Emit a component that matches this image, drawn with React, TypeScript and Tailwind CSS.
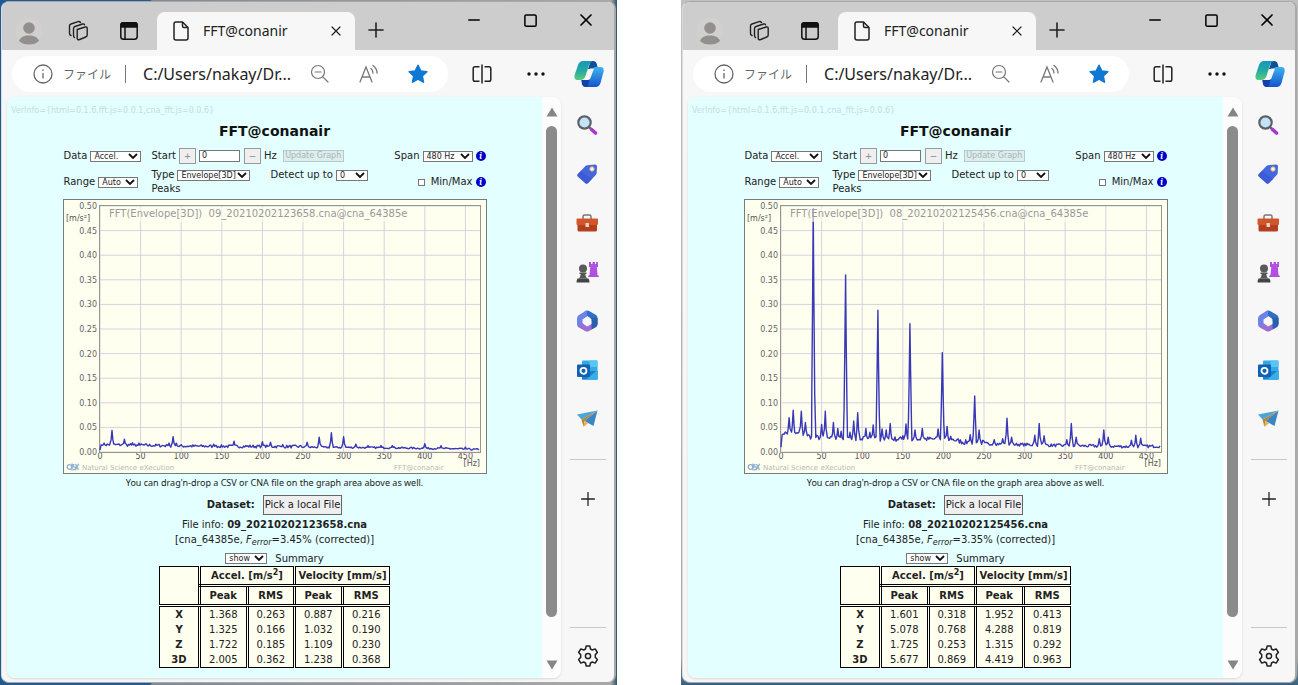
import type { ReactNode } from "react";
import { Minus, Plus, Square, X } from "lucide-react";

type Peak = [hz: number, value: number];

type Capture = {
  id: string;
  file: string;
  error: string;
  base: Peak[];
  peaks: Peak[];
  noise: number;
  summary: [string, string, string, string, string][];
};

const CAPTURES: Capture[] = [
  {
    id: "left",
    file: "09_20210202123658.cna",
    error: "3.45%",
    noise: 0.006,
    base: [[0, 0.004], [2, 0.012], [50, 0.011], [100, 0.009], [250, 0.008], [350, 0.007], [430, 0.005], [470, 0.003]],
    peaks: [
      [5, 0.018], [14.8, 0.044], [30, 0.026], [40, 0.019], [48, 0.018], [85, 0.018], [90, 0.031], [94, 0.018],
      [140, 0.016], [165, 0.022], [200, 0.021], [210, 0.02], [225, 0.015], [255, 0.02], [270, 0.03], [285, 0.039],
      [300, 0.031], [315, 0.016], [330, 0.013], [346, 0.013], [360, 0.013], [400, 0.017], [420, 0.013], [450, 0.01],
    ],
    summary: [
      ["X", "1.368", "0.263", "0.887", "0.216"],
      ["Y", "1.325", "0.166", "1.032", "0.190"],
      ["Z", "1.722", "0.185", "1.109", "0.230"],
      ["3D", "2.005", "0.362", "1.238", "0.368"],
    ],
  },
  {
    id: "right",
    file: "08_20210202125456.cna",
    error: "3.35%",
    noise: 0.01,
    base: [[0, 0.01], [2, 0.034], [30, 0.031], [36, 0.026], [60, 0.022], [210, 0.021], [225, 0.015], [300, 0.012], [350, 0.01], [430, 0.008], [470, 0.009]],
    peaks: [
      [10, 0.07], [15, 0.085], [25, 0.083], [30, 0.06], [39.7, 0.495], [50, 0.056], [54.5, 0.083], [64.5, 0.06],
      [70, 0.048], [74, 0.042], [79.5, 0.36], [85, 0.04], [89.5, 0.063], [94.5, 0.08], [104.5, 0.048], [109.5, 0.04],
      [113.5, 0.055], [119.3, 0.288], [124.5, 0.047], [129.5, 0.045], [134.5, 0.058], [150, 0.033], [154, 0.057],
      [158.8, 0.261], [165, 0.045], [174, 0.048], [193.5, 0.047], [198.7, 0.202], [204.5, 0.052], [209, 0.032],
      [233, 0.035], [238.5, 0.114], [244, 0.045], [262.5, 0.025], [273, 0.027], [278.3, 0.069], [284, 0.03],
      [312.5, 0.034], [318, 0.058], [324, 0.033], [352, 0.025], [357.5, 0.058], [363.5, 0.03], [392, 0.027],
      [397.5, 0.045], [403, 0.03], [431.5, 0.024], [437, 0.034], [443, 0.028],
    ],
    summary: [
      ["X", "1.601", "0.318", "1.952", "0.413"],
      ["Y", "5.078", "0.768", "4.288", "0.819"],
      ["Z", "1.725", "0.253", "1.315", "0.292"],
      ["3D", "5.677", "0.869", "4.419", "0.963"],
    ],
  },
];

// plot area inside the 424x275 graph
const X0 = 37;
const X1 = 417;
const Y0 = 253;
const PX_PER_HZ = 0.812;
const PX_PER_UNIT = 492;

function baseAt(base: Peak[], hz: number) {
  for (let i = 1; i < base.length; i++) {
    const [h0, v0] = base[i - 1];
    const [h1, v1] = base[i];
    if (hz <= h1) return v0 + ((v1 - v0) * (hz - h0)) / (h1 - h0);
  }
  return base[base.length - 1][1];
}

function spectrum({ base, peaks, noise }: Capture) {
  let seed = 7;
  const random = () => {
    seed = (seed * 16807) % 2147483647;
    return seed / 2147483647;
  };
  const samples: Peak[] = [];
  for (let hz = 0; hz <= 467; hz += 1.3) {
    if (peaks.some(([p]) => Math.abs(p - hz) < 1.9)) continue;
    const fade = hz > 250 ? 0.6 : 1;
    samples.push([hz, baseAt(base, hz) + random() * noise * fade]);
  }
  // tall peaks get wide shoulders, small ones a plain tip
  for (const [hz, value] of peaks) {
    const floor = baseAt(base, hz);
    const shoulders = value > 0.1 ? [[0.8, 0.6], [1.8, 0.2]] : [[1.1, 0.4]];
    samples.push([hz, value]);
    for (const [offset, share] of shoulders) {
      samples.push([hz - offset, floor + (value - floor) * share]);
      samples.push([hz + offset, floor + (value - floor) * share]);
    }
  }
  return samples
    .sort((a, b) => a[0] - b[0])
    .map(([hz, v]) => `${(X0 + hz * PX_PER_HZ).toFixed(1)},${(Y0 - v * PX_PER_UNIT).toFixed(1)}`)
    .join(" ");
}

function Graph({ capture }: { capture: Capture }) {
  const rows = Array.from({ length: 11 }, (_, i) => i * 0.05);
  const cols = Array.from({ length: 10 }, (_, i) => i * 50);
  return (
    <svg viewBox="0 0 424 275" className="mt-0.5 block w-full" fontFamily='"DejaVu Sans", Verdana, sans-serif' role="img" aria-label="FFT graph">
      <rect x="0.5" y="0.5" width="423" height="274" fill="#fffff0" stroke="#747c7c" />
      {rows.map((v) => (
        <g key={v}>
          <line x1={X0} x2={X1} y1={Y0 - v * PX_PER_UNIT} y2={Y0 - v * PX_PER_UNIT} stroke="#d3d3dc" />
          <text x="34" y={Y0 - v * PX_PER_UNIT + 3} textAnchor="end" fontSize="8" fill="#666">{v.toFixed(2)}</text>
        </g>
      ))}
      {cols.map((hz) => (
        <g key={hz}>
          <line x1={X0 + hz * PX_PER_HZ} x2={X0 + hz * PX_PER_HZ} y1="7" y2={Y0} stroke="#d3d3dc" />
          <text x={X0 + hz * PX_PER_HZ} y="260" textAnchor="middle" fontSize="8" fill="#555">{hz}</text>
        </g>
      ))}
      <rect x={X0 - 0.5} y="6.5" width={X1 - X0 + 1} height={Y0 - 6} fill="none" stroke="#9c948c" />
      <text x="3" y="22" fontSize="8" fill="#555">[m/s²]</text>
      <text x="417" y="267" textAnchor="end" fontSize="8" fill="#555">[Hz]</text>
      <polyline points={spectrum(capture)} fill="none" stroke="#3838b8" strokeWidth="1.4" strokeLinejoin="round" />
      <rect x="43" y="8" width="298" height="15" fill="#fffff0" fillOpacity="0.6" />
      <text x="46" y="18" fontSize="10" fill="#999" xmlSpace="preserve">{`FFT(Envelope[3D])  ${capture.file}@cna_64385e`}</text>
      <g fill="none" stroke="#8fb0cf" strokeWidth="1.3">
        <circle cx="6.500" cy="268" r="2.300" />
        <path d="M11.500 265.500c-3 0-2 2.500 0 2.500s2 3-1.500 2.700M9 264.500v7M12.500 265l3 6M15.800 264.800l-3.500 6.200" />
      </g>
      <text x="19" y="271" fontSize="7" fill="#b8b8b0">Natural Science eXecution</text>
      <text x="331" y="271" fontSize="7" fill="#b8b8b0">FFT@conanair</text>
    </svg>
  );
}

function Dropdown({ id, value, className }: { id: string; value: string; className: string }) {
  return (
    <span className={`inline-grid h-[11px] border border-[#777] bg-white ${className}`}>
      <select id={id} className="col-start-1 row-start-1 w-full appearance-none bg-transparent pl-[3px] text-[8px] leading-[9px] text-[#222] outline-none">
        <option>{value}</option>
      </select>
      <svg viewBox="0 0 10 6" className="pointer-events-none col-start-1 row-start-1 mr-0.5 h-1.5 w-2.5 self-center justify-self-end">
        <path d="M1 1l4 4 4-4" fill="none" stroke="#111" strokeWidth="1.800" />
      </svg>
    </span>
  );
}

function InfoMark() {
  return (
    <button aria-label="Help" className="flex size-2.5 items-center justify-center rounded-full bg-[#0000c8] font-serif text-[9px] leading-none font-bold text-white italic">
      i
    </button>
  );
}

function Controls({ id }: { id: string }) {
  return (
    <div className="mt-0.5 flex h-[50px] text-[10px] leading-[14px] whitespace-nowrap text-[#222]">
      <div className="flex w-[89px] shrink-0 flex-col gap-3 pt-0.5 pl-px">
        <div className="flex items-center gap-[3px]">
          <label htmlFor={`${id}-data`}>Data</label>
          <Dropdown id={`${id}-data`} value="Accel." className="w-[51px]" />
        </div>
        <div className="flex items-center gap-[3px]">
          <label htmlFor={`${id}-range`}>Range</label>
          <Dropdown id={`${id}-range`} value="Auto" className="w-10" />
        </div>
      </div>
      <div>
        <div className="flex h-[18px] items-center">
          <label htmlFor={`${id}-start`}>Start</label>
          <button className="ml-[3px] h-4 w-[17px] border border-[#999] bg-[#efefef] text-[9px] leading-none text-[#888]">+</button>
          <input id={`${id}-start`} defaultValue="0" className="ml-[3px] h-3 w-[41px] border border-[#777] bg-white px-0.5 text-[8px] outline-none" />
          <button className="ml-1 h-4 w-[17px] border border-[#999] bg-[#efefef] text-[9px] leading-none text-[#888]">−</button>
          <span className="ml-[3px]">Hz</span>
          <button disabled className="ml-1.5 h-3 w-[61px] border border-[#bcc8c8] bg-[#dceeee] text-[8px] leading-none text-[#a8b4b4]">
            Update Graph
          </button>
        </div>
        <div className="mt-[3px] flex items-center">
          <label htmlFor={`${id}-type`} className="mr-[3px]">Type</label>
          <Dropdown id={`${id}-type`} value="Envelope[3D]" className="w-[73px]" />
          <label htmlFor={`${id}-detect`} className="mr-[3px] ml-5">Detect up to</label>
          <Dropdown id={`${id}-detect`} value="0" className="w-8" />
        </div>
        <div>Peaks</div>
      </div>
      <div className="ml-auto flex flex-col items-end gap-3 pt-0.5 pr-px">
        <div className="flex items-center gap-[3px]">
          <label htmlFor={`${id}-span`}>Span</label>
          <Dropdown id={`${id}-span`} value="480 Hz" className="w-[50px]" />
          <InfoMark />
        </div>
        <div className="flex items-center gap-[3px]">
          <label className="flex items-center gap-1.5">
            <input type="checkbox" className="size-[7px] appearance-none border border-[#777] bg-white" />
            Min/Max
          </label>
          <InfoMark />
        </div>
      </div>
    </div>
  );
}

function Summary({ rows }: { rows: Capture["summary"] }) {
  return (
    <table className="mx-auto w-[231px] table-fixed border-collapse border border-black bg-[#fffff0] text-center text-[10px] leading-[15px] text-[#222]">
      <colgroup>
        <col className="w-10" />
        <col />
        <col />
        <col />
        <col />
      </colgroup>
      <thead>
        <tr className="h-[19px]">
          <td rowSpan={2} className="border-b-3 border-double border-black" />
          <th colSpan={2} className="border-b-3 border-l-3 border-double border-black p-0 whitespace-nowrap">
            Accel. [m/s<sup className="text-[8px]">2</sup>]
          </th>
          <th colSpan={2} className="border-b-3 border-l-3 border-double border-black p-0 whitespace-nowrap">Velocity [mm/s]</th>
        </tr>
        <tr className="h-[20px]">
          {["Peak", "RMS", "Peak", "RMS"].map((name, i) => (
            <th key={i} className="border-b-3 border-l-3 border-double border-black p-0">{name}</th>
          ))}
        </tr>
      </thead>
      <tbody>
        {rows.map(([axis, ...values]) => (
          <tr key={axis}>
            <th className="p-0">{axis}</th>
            {values.map((v, i) => (
              <td key={i} className="border-l-3 border-double border-black p-0">{v}</td>
            ))}
          </tr>
        ))}
      </tbody>
    </table>
  );
}

function FftPage({ capture }: { capture: Capture }) {
  return (
    <main className="min-w-0 flex-1 bg-[#e4ffff] pt-2 pb-2 font-['DejaVu_Sans',Verdana,sans-serif] text-[#222]">
      <div className="pl-1 text-[8px] leading-3 whitespace-nowrap text-[#bfdede]">
        {"VerInfo={html=0.1.6,fft.js=0.0.1,cna_fft.js=0.0.6}"}
      </div>
      <div className="mx-auto w-[424px] max-w-full">
        <h1 className="text-center text-[14px] leading-7 font-bold text-[#111]">FFT@conanair</h1>
        <Controls id={capture.id} />
        <Graph capture={capture} />
        <div className="text-center text-[10px] leading-[15px]">
          <p className="font-['Noto_Sans',sans-serif] text-[9px] leading-[18px]">You can drag'n-drop a CSV or CNA file on the graph area above as well.</p>
          <div className="flex h-[25px] items-center justify-center gap-2">
            <b>Dataset:</b>
            <button className="h-5 border border-[#666] bg-[#efefef] px-px">Pick a local File</button>
          </div>
          <p>File info: <b>{capture.file}</b></p>
          <p>
            [cna_64385e, <i>F<sub className="text-[8px]">error</sub></i>={capture.error} (corrected)]
          </p>
          <div className="mt-[3px] flex h-4 items-center justify-center gap-2">
            <Dropdown id={`${capture.id}-summary`} value="show" className="w-[42px]" />
            <label htmlFor={`${capture.id}-summary`}>Summary</label>
          </div>
        </div>
        <Summary rows={capture.summary} />
      </div>
    </main>
  );
}

function IconButton({ label, className, children }: { label: string; className: string; children: ReactNode }) {
  return (
    <button aria-label={label} className={`flex shrink-0 items-center justify-center ${className}`}>
      {children}
    </button>
  );
}

function TitleBar() {
  return (
    <header className="flex h-12 bg-[#cdcdcd] pl-0.5 text-[#222]">
      <IconButton label="Profile" className="w-[49px] pt-2.5">
        <svg viewBox="0 0 28 28" className="size-7">
          <circle cx="14" cy="14" r="13.500" fill="#d2d0ce" />
          <circle cx="14" cy="11" r="5.800" fill="#928f8c" />
          <path d="M4 24c1.500-4 5-5.500 10-5.500s8.500 1.500 10 5.500c-2.500 2.500-6 3.500-10 3.500S6.500 26.500 4 24z" fill="#928f8c" />
        </svg>
      </IconButton>
      <IconButton label="Workspaces" className="w-[50px] pt-2.5">
        <svg viewBox="0 0 22 22" className="size-[22px]" fill="none" stroke="#222" strokeWidth="1.400" strokeLinejoin="round" strokeLinecap="round">
          <path d="M10.200 9.500l8-2.500q2-.5 2 1.500v6.500q0 1.500-1.500 2l-6 2.500q-2.500.8-2.500-1.500z" />
          <path d="M7.500 17.500q-1-.5-1-2V8.500q0-1.500 1.500-2l7.500-2.500q1.500-.5 2 .8" />
          <path d="M4 15.500q-1.500-.5-1.500-2V6q0-1.500 1.500-2l7-2.300q1.500-.5 2.500.8" />
        </svg>
      </IconButton>
      <IconButton label="Tab actions" className="w-[52px] pt-2.5">
        <svg viewBox="0 0 20 20" className="size-5" fill="none" stroke="#111" strokeWidth="1.500">
          <rect x="1.800" y="1.800" width="16.400" height="16.400" rx="2.800" />
          <path d="M2 3.500q0-1.700 2-1.700h12q2 0 2 1.700V6H2z" fill="#111" />
          <path d="M6 6v12" />
        </svg>
      </IconButton>
      <div className="mt-2.5 ml-0.5 flex w-[198px] min-w-0 items-center rounded-t-lg bg-[#f7f7f7] pl-4 text-sm">
        <svg viewBox="0 0 16 20" className="h-5 w-4 shrink-0" fill="none" stroke="#222" strokeWidth="1.500" strokeLinejoin="round">
          <path d="M3 1h6.500l5.500 5.500V17q0 2-2 2H3q-2 0-2-2V3q0-2 2-2z" />
          <path d="M9.500 1v4q0 1.500 1.500 1.500h4" />
        </svg>
        <span className="ml-3.5 min-w-0 flex-1 truncate">FFT@conanir</span>
        <IconButton label="Close tab" className="w-[38px]">
          <X className="size-4" strokeWidth={1.8} />
        </IconButton>
      </div>
      <IconButton label="New tab" className="w-[42px] pt-2">
        <Plus className="size-6" strokeWidth={1.6} />
      </IconButton>
      <div className="ml-auto flex h-9 text-black">
        <IconButton label="Minimize" className="w-14">
          <Minus className="size-[18px]" strokeWidth={1.8} />
        </IconButton>
        <IconButton label="Maximize" className="w-14">
          <Square className="size-[15px]" strokeWidth={2.4} />
        </IconButton>
        <IconButton label="Close" className="w-14">
          <X className="size-5" strokeWidth={2} />
        </IconButton>
      </div>
    </header>
  );
}

function Copilot({ id }: { id: string }) {
  return (
    <svg viewBox="0 0 30 28" className="h-7 w-[30px]">
      <defs>
        <linearGradient id={`${id}-cp-a`} x1="0" y1="0" x2="0" y2="1">
          <stop offset="0" stopColor="#1797bd" />
          <stop offset="0.500" stopColor="#24a9a4" />
          <stop offset="1" stopColor="#58cc7c" />
        </linearGradient>
        <linearGradient id={`${id}-cp-b`} x1="0" y1="0" x2="0" y2="1">
          <stop offset="0" stopColor="#3fb4ee" />
          <stop offset="1" stopColor="#1452d0" />
        </linearGradient>
      </defs>
      <path d="M8 1h11q3 0 3.800 3L24 9H14l2-6z" fill="#0f4f96" />
      <path d="M21 7h5.500q4 0 3 5l-3 11q-1.300 4-5 4H12q-3 0-4-3l-1-4h5q3 0 4-3l2.500-7q.8-3 2.500-3z" fill={`url(#${id}-cp-b)`} />
      <path d="M8 20h5q2 0 3-1.500L13.500 27H12q-3 0-4-3z" fill="#1340a8" />
      <path d="M9 1h10q-3 1-4 4l-3.500 11q-1.500 4-5 4H4q-4.500 0-3.300-5L4 5q1.500-4 5-4z" fill={`url(#${id}-cp-a)`} />
      <path d="M16 8.500h4l-3.500 9.500q-.8 2-2.500 2h-2.500q1.500-1 2-3z" fill="#f7f7f7" />
    </svg>
  );
}

function Toolbar({ id }: { id: string }) {
  return (
    <div className="flex h-[47px] items-center pl-2.5 text-[#222]">
      <div className="flex h-9 min-w-0 flex-1 items-center rounded-full bg-white pr-1.5 pl-[21px]">
        <svg viewBox="0 0 20 20" className="size-5 shrink-0" fill="none" stroke="#666" strokeWidth="1.300">
          <circle cx="10" cy="10" r="9" />
          <path d="M10 9v5.500M10 5.500v1.500" />
        </svg>
        <span className="ml-2.5 shrink-0 font-['Noto_Sans_CJK_JP',sans-serif] text-[12px] text-[#666]">ファイル</span>
        <span className="ml-3.5 h-[18px] w-px shrink-0 bg-[#777]" />
        <input aria-label="Address" defaultValue="C:/Users/nakay/Dr..." className="ml-[17px] w-0 min-w-0 flex-1 bg-transparent text-base outline-none" />
        <IconButton label="Zoom out" className="w-[49px]">
          <svg viewBox="0 0 20 20" className="size-5" fill="none" stroke="#777" strokeWidth="1.200" strokeLinecap="round">
            <circle cx="8" cy="8" r="6.500" />
            <path d="M12.800 12.800l5.200 5.200M5 8h6" />
          </svg>
        </IconButton>
        <IconButton label="Read aloud" className="w-[49px]">
          <svg viewBox="0 0 20 20" className="size-5" fill="none" stroke="#777" strokeWidth="1.300" strokeLinecap="round">
            <path d="M1 18L7 3l6 15M3.200 13h7.600M12 4.500q2 1.500 2 4.500M14 1.500q4 3 4 7.500" />
          </svg>
        </IconButton>
        <IconButton label="Favorite" className="w-[49px]">
          <svg viewBox="0 0 20 20" className="size-5" fill="#0f77d4" stroke="#0f77d4" strokeWidth="1.500" strokeLinejoin="round">
            <path d="M10 1.200l2.700 5.700 6.200.8-4.600 4.300 1.200 6.200-5.500-3-5.500 3 1.200-6.200L1.100 7.700l6.200-.8z" />
          </svg>
        </IconButton>
      </div>
      <IconButton label="Split screen" className="ml-[7px] w-[54px]">
        <svg viewBox="0 0 20 20" className="size-5" fill="none" stroke="#222" strokeWidth="1.500">
          <path d="M7.500 2.800H3q-1.800 0-1.800 1.800v10.800q0 1.800 1.800 1.800h4.500M12.500 2.800H17q1.800 0 1.800 1.800v10.800q0 1.800-1.800 1.800h-4.500M10 .5v19" />
        </svg>
      </IconButton>
      <IconButton label="Settings and more" className="w-[54px]">
        <svg viewBox="0 0 18 4" className="h-1 w-[18px]" fill="#111">
          <circle cx="2" cy="2" r="1.700" />
          <circle cx="9" cy="2" r="1.700" />
          <circle cx="16" cy="2" r="1.700" />
        </svg>
      </IconButton>
      <IconButton label="Copilot" className="w-[51px]">
        <Copilot id={id} />
      </IconButton>
    </div>
  );
}

const SIDEBAR_ICONS: { label: string; art: ReactNode }[] = [
  {
    label: "Search",
    art: (
      <>
        <path d="M13 13l3 3" stroke="#555" strokeWidth="2" />
        <path d="M15.500 15.500l4 3.500" stroke="#a738cf" strokeWidth="3.600" strokeLinecap="round" />
        <circle cx="8.500" cy="8.500" r="6.200" fill="#c3e4f7" stroke="#5c6166" strokeWidth="2.200" />
      </>
    ),
  },
  {
    label: "Shopping",
    art: (
      <>
        <path d="M11 2.200l8-.8q2 0 2 2l-.3 6.600q0 1-1 2l-7.500 8q-1.400 1.400-2.800.2L1.800 13.500q-1.200-1.200 0-2.500l7.700-8q.7-.7 1.500-.8z" fill="#4467e0" />
        <path d="M1.800 13.500l7.600 6.700q1.400 1.200 2.800-.2l4-4.200L5 8 1.800 11q-1.200 1.300 0 2.500z" fill="#3a54cf" opacity="0.600" />
        <circle cx="16" cy="6" r="2.200" fill="#f7f7f7" stroke="#d9b35c" />
      </>
    ),
  },
  {
    label: "Tools",
    art: (
      <>
        <path d="M7 7V4.500q0-1.500 1.500-1.500h5Q15 3 15 4.500V7" fill="none" stroke="#777" strokeWidth="1.500" />
        <rect x="0.500" y="6.500" width="21.500" height="6.500" rx="1" fill="#d2562b" />
        <path d="M1.500 13h19.500v5q0 1.500-1.500 1.500h-16.500Q1.500 19.500 1.500 18z" fill="#b33f1c" />
        <rect x="9.500" y="11" width="3.500" height="4" rx=".6" fill="#ecd3c8" />
      </>
    ),
  },
  {
    label: "Games",
    art: (
      <>
        <path d="M13 1h2v2h1.500V1H19v2h1.200V1H22v5h-1.200l.7 8q1.500.5 1.500 2H12q0-1.500 1.500-2l.8-8H13z" fill="#b14fe0" />
        <circle cx="7" cy="7.500" r="4" fill="#5a5a5a" />
        <path d="M3.500 11.500h7V13H9.300q0 3 2.200 4.500h-9Q4.700 16 4.700 13H3.500z" fill="#555" />
        <path d="M1.500 17.500h11q1 1.500 1 4H.5q0-2.500 1-4z" fill="#444" />
      </>
    ),
  },
  {
    label: "Microsoft 365",
    art: (
      <>
        <path d="M9 1q2.500-1 5 .5L20 5q1.500 1 1.500 3v6l-6-3V8.500L11 6 7 8z" fill="#2f6fc4" />
        <path d="M9.500 1L3 5Q1 6 1 8.500v6q0 2 2 3l3.500 2V9.500L11 6.500V1.500Q10.500.5 9.500 1z" fill="#6d83e6" />
        <path d="M2 16.500L9 21q2 1 4 0l7-4q1.500-1 1.500-3.500V12l-6 2-4.500 2.500L6.500 13z" fill="#9b6ed2" />
        <path d="M21.500 8v6q0 2-1.500 3l-4.500 2.500V9L13 7.500z" fill="#2a5fae" />
        <path d="M11.300 7l3.900 2.200v4.600l-3.900 2.200-3.800-2.200V9.200z" fill="#f7f7f7" />
      </>
    ),
  },
  {
    label: "Outlook",
    art: (
      <>
        <rect x="6" y="1.500" width="15.500" height="19" rx="1" fill="#35a9e6" />
        <path d="M13.500 1.500h8V8h-8z" fill="#58c5f2" />
        <path d="M6 12h15.500v8.500H6z" fill="#1c80c8" />
        <path d="M21.500 11v9.500H10z" fill="#37b0ea" />
        <rect x="1" y="5.500" width="13" height="12.500" rx="1" fill="#0f62b3" />
        <circle cx="7.500" cy="11.800" r="3" fill="none" stroke="#fff" strokeWidth="1.800" />
      </>
    ),
  },
  {
    label: "Drop",
    art: (
      <>
        <path d="M1 6.500l20.500-4L5.500 11.500z" fill="#4aa6d8" />
        <path d="M5.500 11.500l16-9L8.500 13l-1 6z" fill="#b8863a" />
        <path d="M8.500 13l13-10.500L17.500 18z" fill="#3a86c4" />
        <path d="M7.500 19l1-6 3.500 2.300z" fill="#e3b44c" />
      </>
    ),
  },
];

function Sidebar() {
  return (
    <aside className="flex w-[53px] shrink-0 flex-col items-center pt-[3px] text-[#222]">
      {SIDEBAR_ICONS.map(({ label, art }) => (
        <IconButton key={label} label={label} className="h-[49px] w-full">
          <svg viewBox="0 0 23 22" className="h-[22px] w-[23px]" fill="none">{art}</svg>
        </IconButton>
      ))}
      <hr className="mt-4 w-9 border-[#c8c8c8]" />
      <IconButton label="Customize" className="mt-3.5 h-[49px] w-full">
        <Plus className="size-[22px]" strokeWidth={1.4} />
      </IconButton>
      <hr className="mt-auto w-9 border-[#c8c8c8]" />
      <IconButton label="Settings" className="mt-1 mb-0.5 h-12 w-full">
        <svg viewBox="0 0 24 24" className="size-6" fill="none" stroke="#222" strokeWidth="1.500" strokeLinejoin="round">
          <path d="M10.200 2h3.600l.7 3 1.800 1 2.900-1.100 2.200 3.600-2.100 2.100v2.800l2.100 2.100-2.200 3.600-2.900-1.100-1.800 1-.7 3h-3.600l-.7-3-1.800-1-2.900 1.100-2.200-3.600 2.100-2.100v-2.800L2.600 8.500l2.200-3.600L7.700 6l1.800-1z" />
          <circle cx="12" cy="12" r="2.600" />
        </svg>
      </IconButton>
    </aside>
  );
}

function ScrollBar() {
  return (
    <div className="flex w-[19px] shrink-0 flex-col items-center bg-[#fcfcfc] pt-2.5 pb-2">
      <svg viewBox="0 0 12 10" className="h-2.5 w-3"><path d="M6 .5L11.500 9.500H.5z" fill="#858585" /></svg>
      <div className="mt-[9px] w-[11px] flex-1 rounded-full bg-[#8b8b8b]" />
      <svg viewBox="0 0 12 10" className="mt-[43px] h-2.5 w-3"><path d="M6 9.500L.5.5h11z" fill="#858585" /></svg>
    </div>
  );
}

function BrowserWindow({ capture, desktop }: { capture: Capture; desktop: string }) {
  return (
    <section className={`flex min-w-0 flex-1 flex-col p-px pb-0.5 ${desktop}`}>
      <div className="flex flex-1 flex-col overflow-hidden rounded-lg border border-r-2 border-[#a8a8a8] border-l-[#d8dce0] bg-[#f7f7f7] font-['Noto_Sans','Open_Sans',sans-serif]">
        <TitleBar />
        <Toolbar id={capture.id} />
        <div className="flex flex-1">
          <div className="mb-1 ml-[5px] flex min-w-0 flex-1 overflow-hidden rounded-lg shadow-sm">
            <FftPage capture={capture} />
            <ScrollBar />
          </div>
          <Sidebar />
        </div>
      </div>
    </section>
  );
}

export default function App() {
  return (
    <div className="flex min-h-screen gap-16 bg-white">
      <BrowserWindow
        capture={CAPTURES[0]}
        desktop="bg-[linear-gradient(90deg,#215a92_0,#215a92_150px,#7d8b96_152px,#a8a8a8_99%,#2c5570_100%)]"
      />
      <BrowserWindow
        capture={CAPTURES[1]}
        desktop="bg-[linear-gradient(180deg,#c0c0c0_0,#a8a8a8_96%,#356080_100%)]"
      />
    </div>
  );
}
